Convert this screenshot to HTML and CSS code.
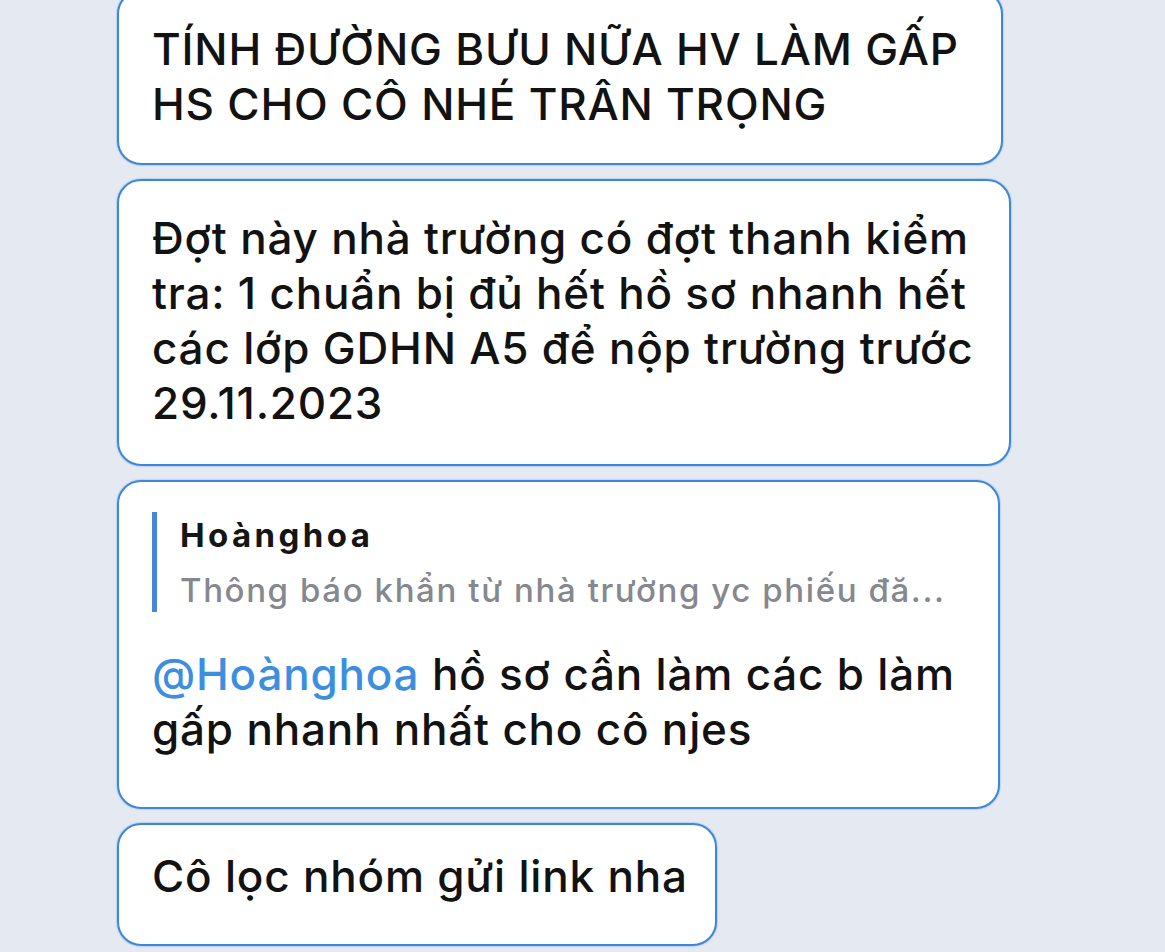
FILE: index.html
```html
<!DOCTYPE html>
<html lang="vi">
<head>
<meta charset="utf-8">
<title>Chat</title>
<link rel="stylesheet" href="styles.css">
</head>
<body>
<main class="chat">
  <div class="bubble bubble--caps">
    <p class="msg">TÍNH ĐƯỜNG BƯU NỮA HV LÀM GẤP<br>HS CHO CÔ NHÉ TRÂN TRỌNG</p>
  </div>
  <div class="bubble bubble--long">
    <p class="msg">Đợt này nhà trường có đợt thanh kiểm<br>tra: 1 chuẩn bị đủ hết hồ sơ nhanh hết<br>các lớp GDHN A5 để nộp trường trước<br>29.11.2023</p>
  </div>
  <div class="bubble bubble--reply">
    <div class="quote">
      <div class="quote-name">Hoànghoa</div>
      <div class="quote-text">Thông báo khẩn từ nhà trường yc phiếu đă...</div>
    </div>
    <p class="msg"><span class="mention">@Hoànghoa</span> hồ sơ cần làm các b làm<br>gấp nhanh nhất cho cô njes</p>
  </div>
  <div class="bubble bubble--short">
    <p class="msg">Cô lọc nhóm gửi link nha</p>
  </div>
</main>
</body>
</html>
```

FILE: styles.css
```css
html, body {
  margin: 0;
  padding: 0;
  background: #e4e9f2;
  height: 100%;
  overflow: hidden;
}
.chat {
  display: flex;
  flex-direction: column;
  align-items: flex-start;
  gap: 14px;
  padding-left: 117px;
  margin-top: -10px;
  font-family: Inter, "Liberation Sans", Arial, sans-serif;
  color: #121212;
}
.bubble {
  box-sizing: border-box;
  background: #fff;
  border: 2px solid #3d86d8;
  border-radius: 24px;
  padding: 30px 30px 33px 33px;
  box-shadow: 0 0 1px 1px rgba(120, 170, 230, 0.35);
}
.bubble--caps { width: 886px; padding-bottom: 31px; }
.bubble--long { width: 894px; }
.bubble--reply { width: 883px; padding-bottom: 50px; }
.bubble--short { width: 600px; padding-top: 24px; padding-bottom: 40px; }
.msg {
  margin: 0;
  font-size: 44px;
  font-weight: 500;
  letter-spacing: 0.8px;
  line-height: 55px;
  white-space: nowrap;
}
.quote {
  border-left: 5px solid #4a86d6;
  padding-left: 23px;
  margin: 0 0 35px 0;
  white-space: nowrap;
}
.quote-name {
  font-size: 33px;
  line-height: 46px;
  font-weight: 700;
  letter-spacing: 3.4px;
  color: #151515;
}
.quote-text {
  margin-top: 10px;
  font-size: 33px;
  font-weight: 500;
  line-height: 44px;
  letter-spacing: 1.6px;
  color: #85888e;
}
.mention {
  color: #3e8ee0;
}
```
